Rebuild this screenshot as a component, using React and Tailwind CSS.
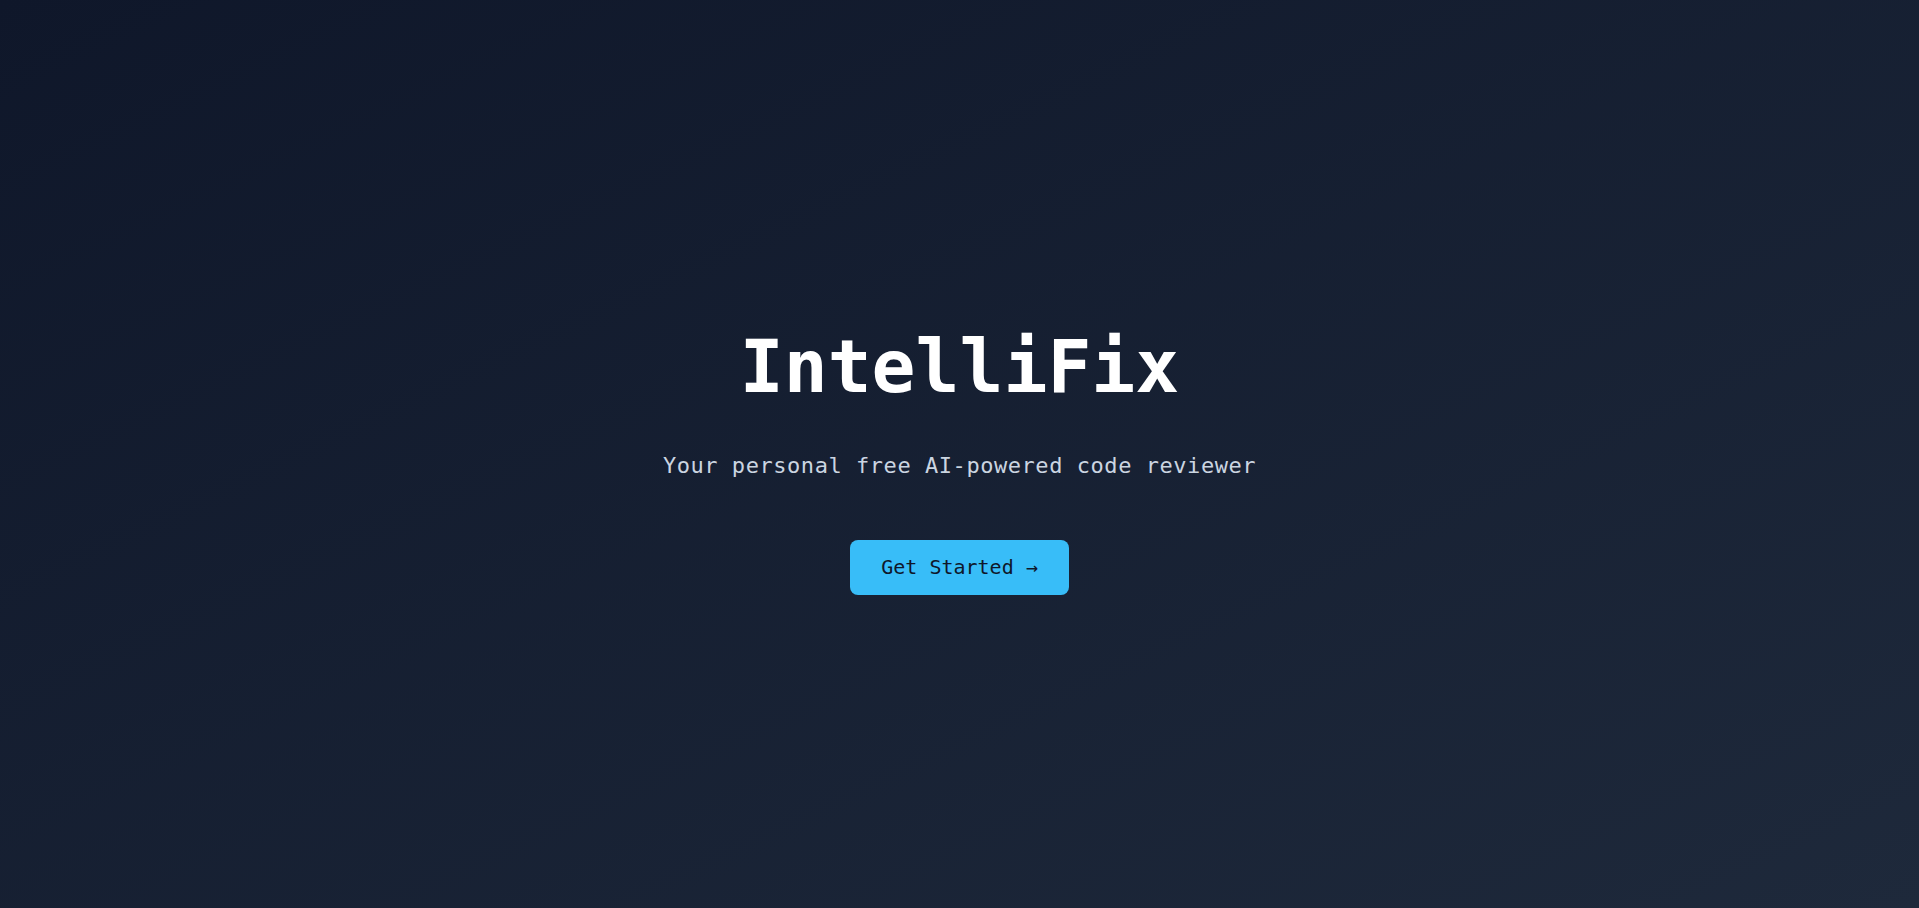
export default function App() {
  return (
    <div
      className="min-h-screen w-full flex flex-col items-center justify-center pt-4 bg-linear-to-br from-[#0f172a] to-[#1e293b]"
      style={{ fontFamily: '"DejaVu Sans Mono", "Liberation Mono", monospace' }}
    >
      {/* Title */}
      <h1 className="text-[73px] leading-none font-bold text-white">IntelliFix</h1>

      {/* Tagline */}
      <p className="mt-[47px] text-[22px] leading-8 tracking-[0.55px] text-[#cbd5e1]">
        Your personal free AI-powered code reviewer
      </p>

      {/* CTA */}
      <button className="mt-[58px] h-[55px] px-[31px] flex items-center rounded-lg bg-[#38bdf8] text-xl text-[#0f172a] hover:bg-[#7dd3fc] transition">
        Get Started →
      </button>
    </div>
  );
}
